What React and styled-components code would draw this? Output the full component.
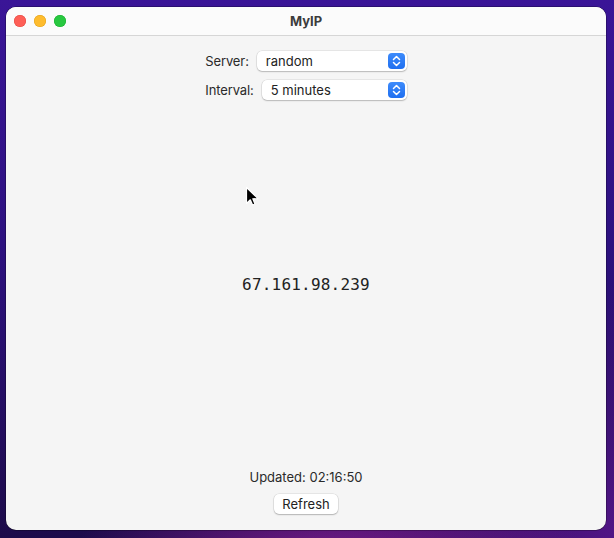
import React from "react";
import styled, { createGlobalStyle } from "styled-components";

const Global = createGlobalStyle`
  html, body { margin: 0; padding: 0; }
  body { width: 614px; height: 538px; overflow: hidden; }
  #root { width: 614px; height: 538px; }
`;

const Desktop = styled.div`
  width: 614px;
  height: 538px;
  box-sizing: border-box;
  padding: 7px 8px 8px 6px;
  display: flex;
  background:
    radial-gradient(ellipse 260px 90px at 330px 560px, #7a1c8c 0%, rgba(122,28,140,0) 100%),
    radial-gradient(ellipse 340px 260px at 640px 540px, #55168a 0%, rgba(85,22,138,0) 100%),
    linear-gradient(180deg, #3a1597 0%, #2d1180 45%, #1d0b4a 100%);
  position: relative;
  font-family: Inter, "Noto Sans", sans-serif;
`;

const Window = styled.div`
  flex: 1;
  display: flex;
  flex-direction: column;
  border-radius: 10px;
  overflow: hidden;
  background: #f5f5f5;
  box-shadow: 0 0 0 0.5px rgba(0,0,0,0.5);
  position: relative;
`;

const TitleBar = styled.div`
  height: 28px;
  flex: none;
  display: flex;
  align-items: center;
  justify-content: center;
  position: relative;
  background: #fbfbfb;
  border-bottom: 1px solid #d6d6d6;
`;

const Lights = styled.div`
  position: absolute;
  left: 8px;
  top: 8px;
  display: flex;
  gap: 8px;
`;

const Light = styled.span`
  width: 12px;
  height: 12px;
  border-radius: 50%;
  background: ${(p) => p.$c};
  box-shadow: inset 0 0 0 0.5px ${(p) => p.$b};
`;

const Title = styled.div`
  font-size: 13px;
  font-weight: 700;
  color: #3c3c3c;
`;

const Content = styled.div`
  flex: 1;
  display: flex;
  flex-direction: column;
  align-items: center;
  padding: 14px 0 16px;
`;

const Form = styled.div`
  display: flex;
  flex-direction: column;
  align-items: center;
  gap: 8px;
`;

const Row = styled.div`
  display: flex;
  align-items: center;
  gap: 8px;
  height: 21px;
`;

const Label = styled.span`
  font-size: 13px;
  color: #2a2a2a;
  letter-spacing: -0.1px;
`;

const Popup = styled.div`
  width: ${(p) => p.$w}px;
  height: 20px;
  box-sizing: border-box;
  display: flex;
  align-items: center;
  justify-content: space-between;
  padding: 0 2px 0 9px;
  background: #fff;
  border-radius: 5px;
  box-shadow: 0 0 0 0.5px rgba(0,0,0,0.12), 0 1px 1.5px rgba(0,0,0,0.2);
  font-size: 13px;
  color: #222;
`;

const Stepper = styled.span`
  width: 17px;
  height: 16px;
  border-radius: 4px;
  background: linear-gradient(180deg, #3d8bfb 0%, #1f6ff0 100%);
  display: flex;
  align-items: center;
  justify-content: center;
`;

const Center = styled.div`
  flex: 1;
  display: flex;
  align-items: center;
  justify-content: center;
`;

const Address = styled.div`
  font-family: "DejaVu Sans Mono", "Liberation Mono", monospace;
  font-size: 16px;
  color: #222;
  letter-spacing: 0.2px;
`;

const Updated = styled.div`
  font-size: 13px;
  color: #2a2a2a;
  margin-bottom: 9px;
`;

const Button = styled.button`
  height: 20px;
  padding: 0 8px;
  border: none;
  border-radius: 5px;
  background: #fff;
  box-shadow: 0 0 0 0.5px rgba(0,0,0,0.12), 0 1px 1.5px rgba(0,0,0,0.22);
  font-family: inherit;
  font-size: 13px;
  color: #222;
`;

const Cursor = styled.svg`
  position: absolute;
  left: 246px;
  top: 187px;
  pointer-events: none;
`;

const Chevrons = () => (
  <svg width="9" height="12" viewBox="0 0 9 12">
    <path d="M1.5 4.5 L4.5 1.5 L7.5 4.5 M1.5 7.5 L4.5 10.5 L7.5 7.5" fill="none" stroke="#fff" strokeWidth="1.5" strokeLinecap="round" strokeLinejoin="round" />
  </svg>
);

export default function App() {
  return (
    <>
      <Global />
      <Desktop>
        <Window>
          <TitleBar>
            <Lights>
              <Light $c="#fe5f57" $b="#e2463f" />
              <Light $c="#febc2e" $b="#e1a116" />
              <Light $c="#28c840" $b="#14ae2b" />
            </Lights>
            <Title>MyIP</Title>
          </TitleBar>
          <Content>
            <Form>
              <Row>
                <Label>Server:</Label>
                <Popup $w={150}>
                  <span>random</span>
                  <Stepper><Chevrons /></Stepper>
                </Popup>
              </Row>
              <Row>
                <Label>Interval:</Label>
                <Popup $w={145}>
                  <span>5 minutes</span>
                  <Stepper><Chevrons /></Stepper>
                </Popup>
              </Row>
            </Form>
            <Center>
              <Address>67.161.98.239</Address>
            </Center>
            <Updated>Updated: 02:16:50</Updated>
            <Button>Refresh</Button>
          </Content>
        </Window>
        <Cursor width="16" height="24" viewBox="0 0 16 24">
          <path d="M7.5 8.5 L7.5 24.5 L11.3 20.8 L13.6 26 L16 25 L13.8 19.8 L19 19.6 Z" transform="translate(-7 -8)" fill="#000" stroke="#fff" strokeWidth="1.2" strokeLinejoin="round" />
        </Cursor>
      </Desktop>
    </>
  );
}
